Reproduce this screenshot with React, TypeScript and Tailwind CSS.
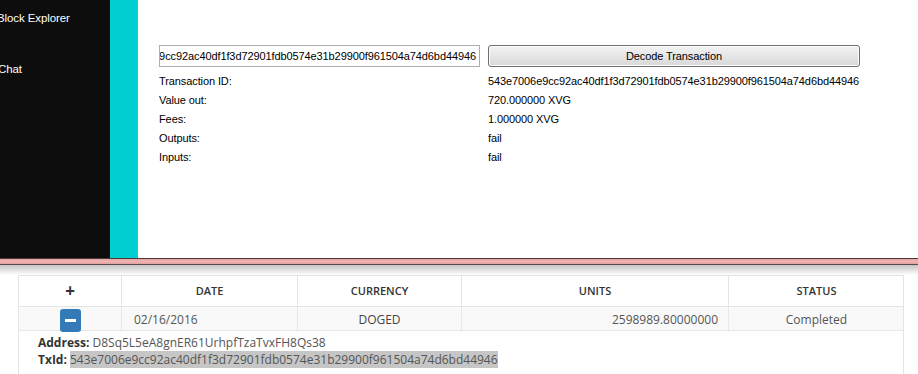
import React from 'react';

const TXID = '543e7006e9cc92ac40df1f3d72901fdb0574e31b29900f961504a74d6bd44946';

const details = [
  { label: 'Transaction ID:', value: TXID },
  { label: 'Value out:', value: '720.000000 XVG' },
  { label: 'Fees:', value: '1.000000 XVG' },
  { label: 'Outputs:', value: 'fail' },
  { label: 'Inputs:', value: 'fail' },
];

const Wallet: React.FC = () => (
  <div className="flex h-[258px] font-['Liberation_Sans',Tahoma,sans-serif] text-[11px] tracking-[-0.1px] text-black">
    {/* side menu */}
    <div className="w-[110px] shrink-0 overflow-hidden bg-[#0d0d0d] text-[11.5px] text-white">
      <div className="-ml-[3px] mt-[11px] whitespace-nowrap leading-[15px]">Block Explorer</div>
      <div className="-ml-[2px] mt-[36px] whitespace-nowrap leading-[15px]">Chat</div>
    </div>
    <div className="w-[28px] shrink-0 bg-[#00cfd2]" />
    <div className="flex-1 bg-white pl-[21px] pt-[45px]">
      <div className="flex items-center">
        <div className="flex h-[22px] w-[321px] items-center justify-end overflow-hidden whitespace-nowrap border border-[#abadb3] bg-white pr-[3px]">
          {TXID}
        </div>
        <button className="ml-[8px] h-[22px] w-[372px] rounded-[3px] border border-[#707070] bg-gradient-to-b from-[#f3f3f3] to-[#d8d8d8] text-[11px] text-black shadow-[inset_0_0_0_1px_#fbfbfb]">
          Decode Transaction
        </button>
      </div>
      <div className="mt-[5px]">
        {details.map((d) => (
          <div key={d.label} className="flex h-[19px] items-center">
            <div className="w-[329px] shrink-0">{d.label}</div>
            <div className="whitespace-nowrap">{d.value}</div>
          </div>
        ))}
      </div>
    </div>
  </div>
);

const Separator: React.FC = () => (
  <div>
    <div className="h-px bg-[#4b3a3a]" />
    <div className="h-[5px] bg-gradient-to-b from-[#e6a3a3] via-[#efb4b4] to-[#e2a0a0]" />
    <div className="h-px bg-[#5b4848]" />
    <div className="h-[10px] bg-gradient-to-b from-[#c4c4c4] to-white" />
  </div>
);

const cols = 'grid grid-cols-[103px_176px_164px_267px_175px]';

const TxTable: React.FC = () => (
  <div className="ml-[18px] w-[886px] border-x border-t border-[#e4e4e4] font-['Open_Sans',sans-serif] text-[12px] text-[#555]">
    <div className={`${cols} h-[31px] border-b border-[#e4e4e4] text-[11px] font-semibold uppercase text-[#333]`}>
      <div className="flex items-center justify-center border-r border-[#e4e4e4] text-[17px] font-bold">+</div>
      <div className="flex items-center justify-center border-r border-[#e4e4e4]">Date</div>
      <div className="flex items-center justify-center border-r border-[#e4e4e4]">Currency</div>
      <div className="flex items-center justify-center border-r border-[#e4e4e4]">Units</div>
      <div className="flex items-center justify-center">Status</div>
    </div>
    <div className={`${cols} h-[24px] border-b border-[#e8e8e8] bg-[#f9f9f9]`}>
      <div className="flex items-center justify-center border-r border-[#e8e8e8] pt-[2px]">
        <span className="flex h-[23px] w-[21px] items-center justify-center rounded-[3px] bg-[#337ab7]">
          <span className="h-[3px] w-[11px] bg-white" />
        </span>
      </div>
      <div className="flex items-center border-r border-[#e8e8e8] pl-[12px]">02/16/2016</div>
      <div className="flex items-center justify-center border-r border-[#e8e8e8] text-[#444]">DOGED</div>
      <div className="flex items-center justify-end border-r border-[#e8e8e8] pr-[10px]">2598989.80000000</div>
      <div className="flex items-center justify-center">Completed</div>
    </div>
    <div className="h-[50px] pl-[19px] pt-[3px] leading-[17px]">
      <div>
        <span className="font-bold text-[#333]">Address:</span> D8Sq5L5eA8gnER61UrhpfTzaTvxFH8Qs38
      </div>
      <div>
        <span className="font-bold text-[#333]">TxId:</span>{' '}
        <span className="bg-[#c6c6c6]">{TXID}</span>
      </div>
    </div>
  </div>
);

export default function App() {
  return (
    <div className="h-[374px] w-[918px] overflow-hidden bg-white">
      <Wallet />
      <Separator />
      <TxTable />
    </div>
  );
}
